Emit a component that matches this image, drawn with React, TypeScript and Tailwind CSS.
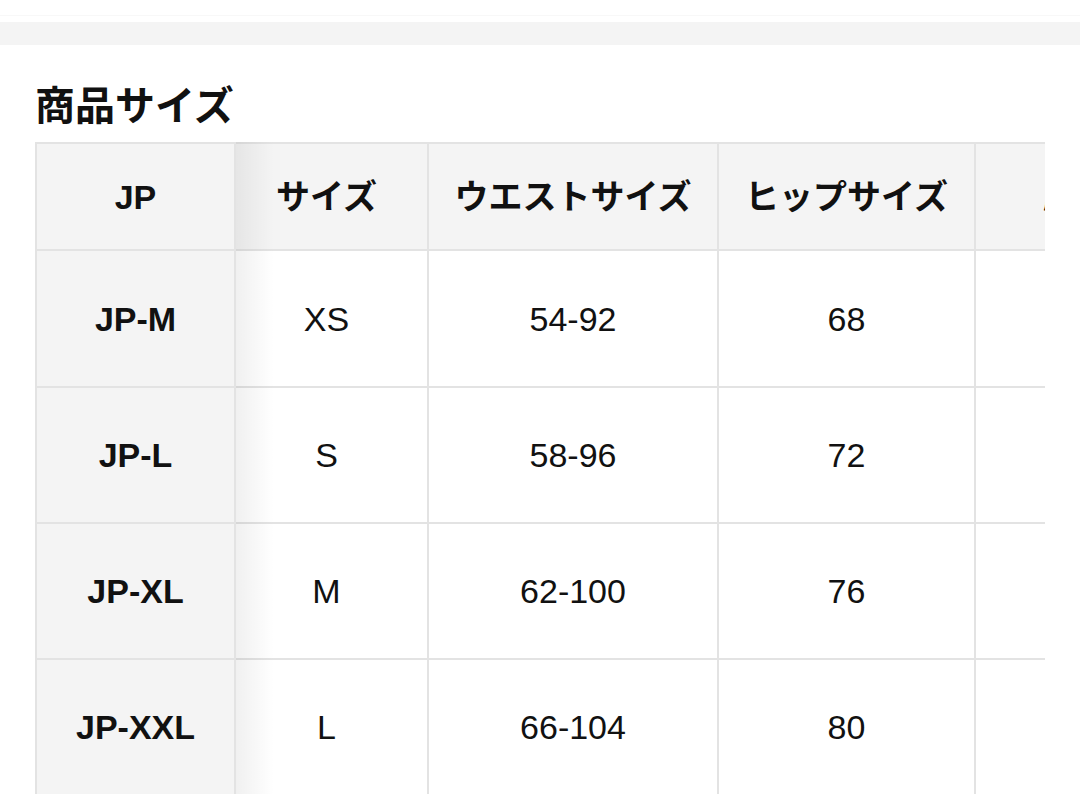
import React from "react";

const rows = [
  ["JP-M", "XS", "54-92", "68"],
  ["JP-L", "S", "58-96", "72"],
  ["JP-XL", "M", "62-100", "76"],
  ["JP-XXL", "L", "66-104", "80"],
];

const rowHeights = ["h-[137px]", "h-[136px]", "h-[136px]", "h-[136px]"];

export default function App() {
  const font = { fontFamily: '"Liberation Sans", "Noto Sans CJK JP", sans-serif' };
  return (
    <div className="w-[1080px] h-[794px] overflow-hidden bg-white text-[#111]" style={font}>
      <div className="h-[16px] border-b border-[#f8f8f8]" />
      <div className="mt-[6px] h-[23px] bg-[#f4f4f4]" />
      <h2 className="mt-[38px] ml-[35px] text-[40px] leading-[40px] font-bold" style={{ fontFamily: '"Noto Sans CJK JP", sans-serif' }}>
        商品サイズ
      </h2>
      <div className="relative mt-[19px] ml-[35px] w-[1010px] overflow-hidden">
        <table className="table-fixed border-separate border-spacing-0 border-l-2 border-t-2 border-[#e3e3e3] w-[1275px]">
          <colgroup>
            <col className="w-[199px]" />
            <col className="w-[193px]" />
            <col className="w-[290px]" />
            <col className="w-[257px]" />
            <col className="w-[334px]" />
          </colgroup>
          <thead>
            <tr>
              {["JP", "サイズ", "ウエストサイズ", "ヒップサイズ", "股下サイズ"].map((h, i) => (
                <th
                  key={i}
                  className={`h-[107px] bg-[#f4f4f4] border-r-2 border-b-2 border-[#e3e3e3] text-[34px] font-bold leading-none p-0 ${i === 4 ? "text-left pl-[67px]" : "text-center"} ${i === 1 ? "pr-[10px]" : ""}`}
                >
                  {h}
                </th>
              ))}
            </tr>
          </thead>
          <tbody>
            {rows.map((r, ri) => (
              <tr key={ri}>
                {r.map((c, ci) => (
                  <td
                    key={ci}
                    className={`${rowHeights[ri]} border-r-2 border-b-2 border-[#e3e3e3] text-center text-[34px] leading-none p-0 ${ci === 0 ? "bg-[#f4f4f4] font-bold" : "bg-white"} ${ci === 1 ? "pr-[10px]" : ""}`}
                  >
                    {c}
                  </td>
                ))}
                <td className={`${rowHeights[ri]} border-r-2 border-b-2 border-[#e3e3e3] bg-white p-0`} />
              </tr>
            ))}
          </tbody>
        </table>
        <div className="pointer-events-none absolute top-0 bottom-0 left-[201px] w-[38px] bg-gradient-to-r from-[rgba(0,0,0,0.06)] to-transparent" />
      </div>
    </div>
  );
}
